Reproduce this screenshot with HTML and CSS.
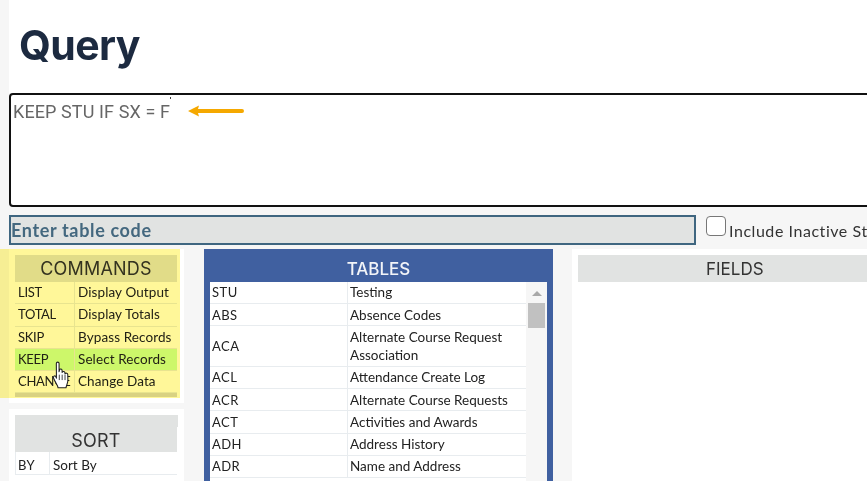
FILE: index.html
```html
<!DOCTYPE html>
<html lang="en">
<head>
<meta charset="utf-8">
<title>Query</title>
<link rel="stylesheet" href="styles.css">
</head>
<body>
<div class="page">
  <header class="title-bar"><h1>Query</h1></header>
  <div class="query-box">KEEP STU IF SX = F</div>
  <div class="code-row">
    <div class="code-input">Enter table code</div>
    <label class="inactive"><span class="checkbox"></span><span>Include Inactive Students</span></label>
  </div>
  <div class="panels">
    <div class="left-col">
      <section class="panel commands">
        <h2 class="panel-head cmd-head">COMMANDS</h2>
        <div class="row cmd-row"><div class="c1">LIST</div><div class="c2">Display Output</div></div>
        <div class="row cmd-row"><div class="c1">TOTAL</div><div class="c2">Display Totals</div></div>
        <div class="row cmd-row"><div class="c1">SKIP</div><div class="c2">Bypass Records</div></div>
        <div class="row cmd-row active"><div class="c1">KEEP</div><div class="c2">Select Records</div></div>
        <div class="row cmd-row"><div class="c1">CHANGE</div><div class="c2">Change Data</div></div>
        <div class="cmd-foot"></div>
      </section>
      <section class="panel sort">
        <div class="sort-cap"></div>
        <h2 class="panel-head sort-head">SORT</h2>
        <div class="row sort-row"><div class="c1">BY</div><div class="c2">Sort By</div></div>
      </section>
    </div>
    <section class="tables">
      <h2 class="tables-head">TABLES</h2>
      <div class="tables-body">
        <div class="tables-list">
          <div class="row t-row"><div class="c1">STU</div><div class="c2">Testing</div></div>
          <div class="row t-row"><div class="c1">ABS</div><div class="c2">Absence Codes</div></div>
          <div class="row t-row"><div class="c1">ACA</div><div class="c2">Alternate Course Request Association</div></div>
          <div class="row t-row"><div class="c1">ACL</div><div class="c2">Attendance Create Log</div></div>
          <div class="row t-row"><div class="c1">ACR</div><div class="c2">Alternate Course Requests</div></div>
          <div class="row t-row"><div class="c1">ACT</div><div class="c2">Activities and Awards</div></div>
          <div class="row t-row"><div class="c1">ADH</div><div class="c2">Address History</div></div>
          <div class="row t-row"><div class="c1">ADR</div><div class="c2">Name and Address</div></div>
        </div>
        <div class="scrollbar"><span class="scroll-up"></span><span class="scroll-thumb"></span></div>
      </div>
    </section>
    <section class="fields">
      <h2 class="fields-head">FIELDS</h2>
    </section>
  </div>
  <div class="highlight"></div>
  <span class="caret-tick"></span>
  <svg class="arrow" width="56" height="12" viewBox="0 0 56 12"><path d="M0 6 L11 0.5 L10 4 L54 4 A2 2 0 0 1 54 8 L10 8 L11 11.5 Z" fill="#f5a800"/></svg>
  <svg class="hand" width="17" height="28" viewBox="0 0 14 23.5"><path d="M3.5 2 C3.5 0.6 5.8 0.6 5.8 2 L5.8 9 L6.2 7.4 C6.6 6.4 8.2 6.6 8.3 7.8 L8.4 9.6 C8.8 8.4 10.6 8.6 10.7 9.9 L10.8 10.8 C11.3 9.8 13 10.1 13.1 11.3 L13.2 16 C13.2 19 12 20 11.6 22.5 L5 22.5 C4.6 20 2.6 18 1.2 14.5 C0.5 12.8 2.2 12 3 13 L3.6 14.4 Z" fill="#fff" stroke="#222" stroke-width="0.9" stroke-linejoin="round"/><path d="M6 11.5V16M8.4 11.5V16M10.8 11.5V16" stroke="#222" stroke-width="0.7" fill="none"/></svg>
</div>
</body>
</html>
```
FILE: styles.css
```css
* { box-sizing: border-box; }
html, body { margin: 0; height: 481px; overflow: hidden; background: #f6f6f6; }
body { font-family: "Lato", "Noto Sans", sans-serif; color: #222; }
.page { position: relative; width: 1100px; height: 481px; padding-left: 9px; overflow: hidden; }
.title-bar { height: 93px; background: #fff; padding: 19px 0 0 10px; }
h1 { margin: 0; font: 700 41px/52px "Inter", sans-serif; color: #1c2a40; letter-spacing: -.6px; }
h2 { margin: 0; font-weight: 400; }
.query-box { height: 114px; background: #fff; border: 2px solid #111; border-radius: 4px; padding: 5px 2px; font: 400 18px/23px "Roboto", sans-serif; color: #666; letter-spacing: .1px; }
.code-row { display: flex; align-items: flex-start; margin-top: 8px; }
.code-input { width: 687px; height: 30px; flex: none; background: #e1e3e2; border: 2px solid #3f6680; font: 700 18px/27px "Lato", sans-serif; color: #44687f; letter-spacing: .65px; }
.inactive { display: flex; align-items: flex-start; margin: 1px 0 0 10px; font-size: 16px; color: #333; letter-spacing: .55px; }
.checkbox { display: block; width: 20px; height: 20px; margin-right: 3px; background: #fff; border: 1px solid #777; border-radius: 4px; }
.inactive span:last-child { line-height: 20px; margin-top: 5px; }
.panels { display: flex; margin-top: 4px; align-items: flex-start; }
.left-col { width: 175px; flex: none; margin-right: 20px; }
.panel { background: #fff; padding: 6px; }
.panel-head { background: #e1e3e2; text-align: center; font: 400 18px/27px "Inter", sans-serif; color: #333; letter-spacing: .2px; }
.commands { height: 154px; padding-right: 7px; }
.row { display: flex; font-size: 13.5px; color: #222; }
.c1, .c2 { padding: 0 2px 0 3px; }
.c2 { border-left: 1px solid #e8ecef; }
.cmd-row { height: 22.3px; line-height: 21px; border-bottom: 1px solid #e8ecef; }
.cmd-row .c1 { width: 59px; flex: none; font-size: 13px; letter-spacing: -.3px; white-space: nowrap; }
.cmd-row .c2 { flex: 1; white-space: nowrap; letter-spacing: .1px; }
.active { background: #cdffb0; }
.cmd-foot { height: 4px; background: #d9d9d9; }
.sort { margin-top: 6px; height: 90px; }
.sort-cap { height: 12px; background: #e1e3e2; }
.sort-head { height: 25px; line-height: 28px; margin-right: 1px; }
.sort-row { height: 23px; line-height: 26px; border-bottom: 1px solid #e8ecef; margin-right: 1px; border-left: 1px solid #e8ecef; }
.sort-row .c1 { width: 33px; flex: none; padding-left: 2px; font-size: 13px; letter-spacing: .4px; }
.sort-row .c2 { flex: 1; }
.tables { width: 349px; flex: none; background: #4060a0; padding: 0 6px; height: 240px; margin-right: 19px; }
.tables-head { height: 33px; padding-top: 9px; text-align: center; font: 500 17px/22px "Inter", sans-serif; color: #f2f4f8; }
.tables-body { display: flex; background: #fff; height: 207px; }
.tables-list { width: 316px; flex: none; }
.t-row { border-bottom: 1px solid #e8ecef; line-height: 18.4px; align-items: stretch; }
.t-row .c1 { width: 137px; flex: none; padding: 0 0 0 2px; display: flex; align-items: center; font-size: 13px; letter-spacing: .45px; }
.t-row .c2 { flex: 1; padding: 1.4px 2px; }
.scrollbar { display: flex; flex-direction: column; align-items: center; width: 21px; padding-top: 9px; background: #f6f6f6; }
.scroll-up { width: 0; height: 0; border: 5px solid transparent; border-top: 0; border-bottom: 5px solid #a8a8a8; }
.scroll-thumb { width: 17px; height: 25px; margin-top: 7px; background: #c1c1c1; }
.fields { width: 520px; flex: none; background: #fff; padding: 6px; height: 232px; }
.fields-head { height: 27px; background: #e1e3e2; font: 400 17px/29px "Inter", sans-serif; color: #333; padding-left: 128px; }
.highlight { position: absolute; left: 0; top: 249px; width: 180px; height: 149px; background: #fff799; mix-blend-mode: multiply; }
.caret-tick { position: absolute; left: 170px; top: 97px; width: 1px; height: 2px; background: #444; }
.arrow { position: absolute; left: 188px; top: 105px; }
.hand { position: absolute; left: 52px; top: 361px; }
```
